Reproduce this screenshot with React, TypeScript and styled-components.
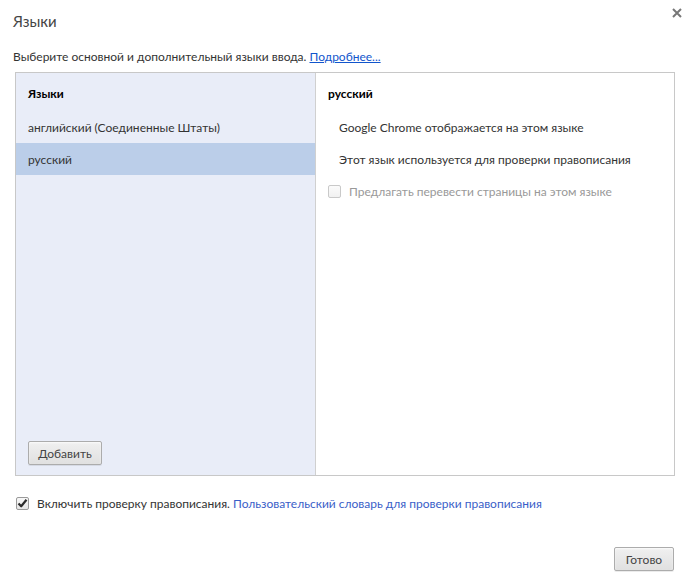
import * as React from 'react';
import styled, { createGlobalStyle } from 'styled-components';

const GlobalStyle = createGlobalStyle`
  html, body {
    margin: 0;
    padding: 0;
    background: #ffffff;
  }
  body {
    font-family: Lato, "Open Sans", Arial, sans-serif;
    font-size: 12px;
    color: #333333;
  }
`;

const Dialog = styled.div`
  width: 692px;
  height: 584px;
  box-sizing: border-box;
  padding: 0 17px 0 15px;
  display: flex;
  flex-direction: column;
  position: relative;
  background: #fff;
`;

const Title = styled.h1`
  margin: 0 0 0 -2px;
  padding-top: 12px;
  height: 36px;
  box-sizing: border-box;
  font-size: 15px;
  font-weight: 400;
  line-height: 18px;
  color: #444;
`;

const CloseButton = styled.button`
  position: absolute;
  top: 6px;
  right: 8px;
  width: 14px;
  height: 14px;
  padding: 0;
  border: none;
  background: transparent;
  display: flex;
  align-items: center;
  justify-content: center;
  cursor: pointer;
`;

const Description = styled.p`
  margin: 0 0 0 -2px;
  height: 36px;
  padding-top: 13px;
  box-sizing: border-box;
  line-height: 16px;
  font-size: 12px;
  color: #333;
`;

const Link = styled.a<{ $underline?: boolean }>`
  color: ${(p) => (p.$underline ? '#1155cc' : '#3a5ec8')};
  text-decoration: ${(p) => (p.$underline ? 'underline' : 'none')};
  cursor: pointer;
`;

const Panels = styled.div`
  display: grid;
  grid-template-columns: 300px 1fr;
  height: 404px;
  box-sizing: border-box;
  border: 1px solid #c8c8c8;
`;

const LeftPane = styled.div`
  background: #e9edf8;
  border-right: 1px solid #d0d0d0;
  display: flex;
  flex-direction: column;
`;

const RightPane = styled.div`
  background: #fff;
  display: flex;
  flex-direction: column;
`;

const PaneHeader = styled.div`
  padding: 13px 0 9px 12px;
  line-height: 16px;
  font-weight: 700;
  color: #000;
`;

const LangRow = styled.div<{ $selected?: boolean }>`
  height: 32px;
  display: flex;
  align-items: center;
  padding-left: 12px;
  background: ${(p) => (p.$selected ? '#bbcee9' : 'transparent')};
  color: #333;
`;

const InfoRow = styled.div<{ $disabled?: boolean }>`
  height: 32px;
  display: flex;
  align-items: center;
  padding-left: ${(p) => (p.$disabled ? '12px' : '23px')};
  gap: 8px;
  color: ${(p) => (p.$disabled ? '#999' : '#333')};
`;

const Spacer = styled.div`
  flex: 1;
`;

const PaneFooter = styled.div`
  padding: 0 0 10px 12px;
`;

const Button = styled.button<{ $width: number }>`
  width: ${(p) => p.$width}px;
  height: 24px;
  padding: 0;
  font-family: inherit;
  font-size: 12px;
  color: #444;
  border: 1px solid #acacac;
  border-radius: 2px;
  background: linear-gradient(#f0f0f0, #e0e0e0);
  box-shadow: 0 1px 0 rgba(0, 0, 0, 0.08), inset 0 1px 2px rgba(255, 255, 255, 0.75);
  cursor: pointer;
`;

const CheckRow = styled.label`
  display: flex;
  align-items: center;
  gap: 8px;
  height: 54px;
  padding-left: 1px;
  color: #333;
`;

const Box = styled.span<{ $disabled?: boolean }>`
  width: 13px;
  height: 13px;
  box-sizing: border-box;
  border: 1px solid ${(p) => (p.$disabled ? '#c9c9c9' : '#9a9a9a')};
  border-radius: 2px;
  background: ${(p) => (p.$disabled ? 'linear-gradient(#fbfbfb, #f1f1f1)' : 'linear-gradient(#f7f7f7, #e6e6e6)')};
  display: flex;
  align-items: center;
  justify-content: center;
  flex-shrink: 0;
`;

const ButtonRow = styled.div`
  display: flex;
  justify-content: flex-end;
  padding: 17px 1px 0 0;
`;

const Checkbox = ({ checked, disabled }: { checked?: boolean; disabled?: boolean }) => (
  <Box $disabled={disabled}>
    {checked && (
      <svg width="11" height="11" viewBox="0 0 11 11">
        <path d="M1.5 5.5 L4.2 8.3 L9.5 1.8" fill="none" stroke="#2b2b2b" strokeWidth="2.2" strokeLinejoin="round" />
      </svg>
    )}
  </Box>
);

export default function App() {
  return (
    <>
      <GlobalStyle />
      <Dialog>
        <Title>Языки</Title>
        <CloseButton aria-label="Закрыть">
          <svg width="10" height="10" viewBox="0 0 10 10">
            <path d="M1 1 L9 9 M9 1 L1 9" stroke="#777" strokeWidth="2" />
          </svg>
        </CloseButton>
        <Description>
          Выберите основной и дополнительный языки ввода. <Link $underline>Подробнее...</Link>
        </Description>
        <Panels>
          <LeftPane>
            <PaneHeader>Языки</PaneHeader>
            <LangRow>английский (Соединенные Штаты)</LangRow>
            <LangRow $selected>русский</LangRow>
            <Spacer />
            <PaneFooter>
              <Button $width={74}>Добавить</Button>
            </PaneFooter>
          </LeftPane>
          <RightPane>
            <PaneHeader>русский</PaneHeader>
            <InfoRow>Google Chrome отображается на этом языке</InfoRow>
            <InfoRow>Этот язык используется для проверки правописания</InfoRow>
            <InfoRow $disabled>
              <Checkbox disabled />
              Предлагать перевести страницы на этом языке
            </InfoRow>
          </RightPane>
        </Panels>
        <CheckRow>
          <Checkbox checked />
          <span>
            Включить проверку правописания. <Link>Пользовательский словарь для проверки правописания</Link>
          </span>
        </CheckRow>
        <ButtonRow>
          <Button $width={60}>Готово</Button>
        </ButtonRow>
      </Dialog>
    </>
  );
}
